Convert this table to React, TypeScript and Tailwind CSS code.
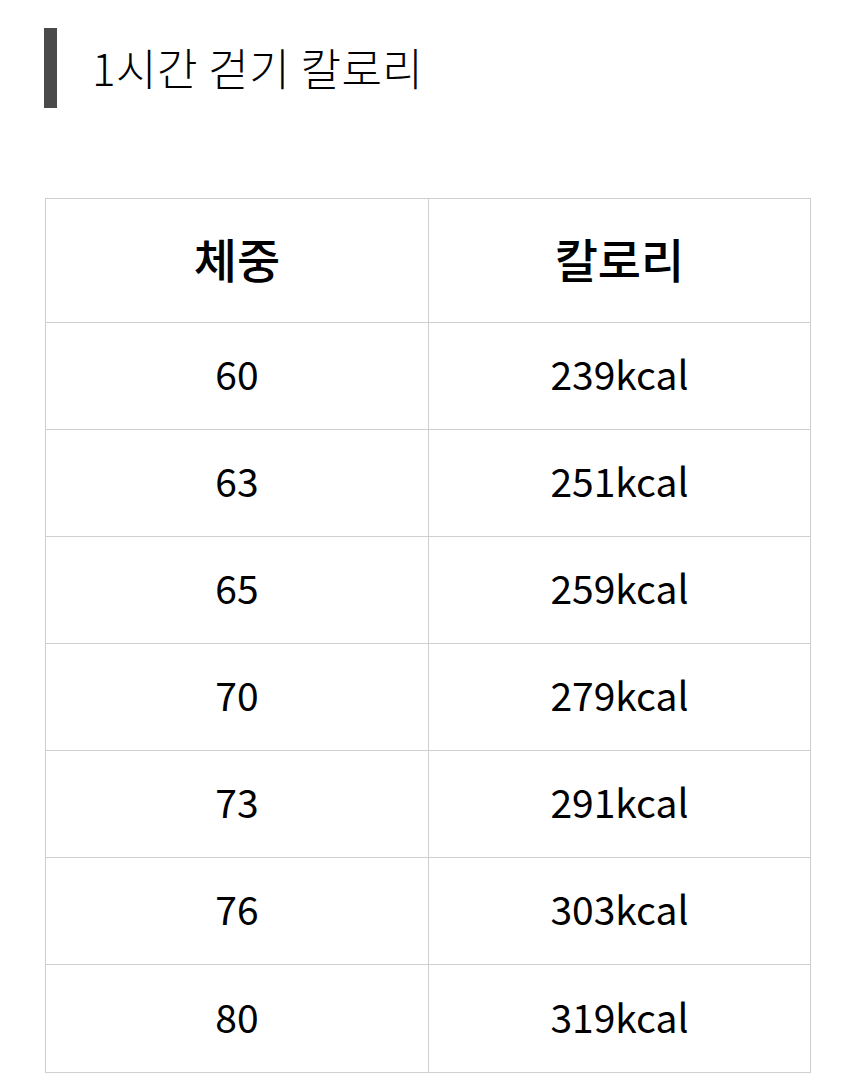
import React from "react";

const rows: [string, string][] = [
  ["60", "239kcal"],
  ["63", "251kcal"],
  ["65", "259kcal"],
  ["70", "279kcal"],
  ["73", "291kcal"],
  ["76", "303kcal"],
  ["80", "319kcal"],
];

export default function App() {
  return (
    <div
      className="w-[856px] h-[1078px] bg-white text-black overflow-hidden"
      style={{ fontFamily: '"Noto Sans CJK KR", "Noto Sans", sans-serif' }}
    >
      <div className="flex items-center pt-[28px] pl-[44px] h-[108px]">
        <div className="w-[13px] h-[80px] bg-[#4a4a4a]" />
        <div className="ml-[35px] text-[44px] font-light leading-none tracking-[0.5px] -mt-[2px]">
          1시간 걷기 칼로리
        </div>
      </div>
      <div className="mt-[90px] ml-[45px] w-[766px] border border-[#cfcfcf]">
        <div className="grid grid-cols-[383px_1fr] h-[124px] border-b border-[#cfcfcf]">
          <div className="flex items-center justify-center border-r border-[#cfcfcf] text-[47px] font-medium pb-[5px]">
            체중
          </div>
          <div className="flex items-center justify-center text-[47px] font-medium pb-[5px]">
            칼로리
          </div>
        </div>
        {rows.map(([w, c], i) => (
          <div
            key={w}
            className={
              "grid grid-cols-[383px_1fr] h-[107px] " +
              (i < rows.length - 1 ? "border-b border-[#cfcfcf]" : "")
            }
          >
            <div className="flex items-center justify-center border-r border-[#cfcfcf] text-[39px] pb-[5px]">
              {w}
            </div>
            <div className="flex items-center justify-center text-[39px] pb-[5px]">{c}</div>
          </div>
        ))}
      </div>
    </div>
  );
}
